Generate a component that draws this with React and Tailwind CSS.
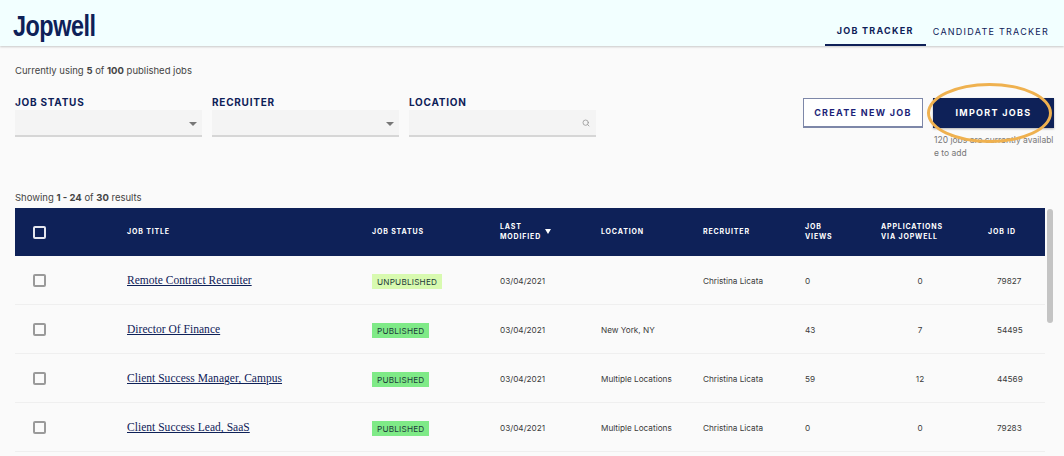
import React from "react";
import { Search } from "lucide-react";

const jobs = [
  { title: "Remote Contract Recruiter", status: "UNPUBLISHED", date: "03/04/2021", location: "", recruiter: "Christina Licata", views: "0", apps: "0", id: "79827" },
  { title: "Director Of Finance", status: "PUBLISHED", date: "03/04/2021", location: "New York, NY", recruiter: "", views: "43", apps: "7", id: "54495" },
  { title: "Client Success Manager, Campus", status: "PUBLISHED", date: "03/04/2021", location: "Multiple Locations", recruiter: "Christina Licata", views: "59", apps: "12", id: "44569" },
  { title: "Client Success Lead, SaaS", status: "PUBLISHED", date: "03/04/2021", location: "Multiple Locations", recruiter: "Christina Licata", views: "0", apps: "0", id: "79283" },
];

const gridCols = "grid grid-cols-[112px_245px_128px_101px_102px_102px_76px_107px_57px] items-center";

const Filter = ({ label, children }) => (
  <div className="w-[187px]">
    <div className="text-[10px] leading-[12px] font-bold tracking-[0.75px] text-[#0e2158]">{label}</div>
    <div className="mt-[2px] flex h-[27px] items-center justify-end border-b-2 border-[#d6d6d6] bg-[#f4f4f4] pr-[5px]">
      {children}
    </div>
  </div>
);

const Caret = () => (
  <div className="mt-[2px] h-0 w-0 border-x-[4px] border-t-[4px] border-x-transparent border-t-[#777777]" />
);

const Checkbox = ({ dark }) => (
  <div className={`ml-[18px] h-[13px] w-[13px] rounded-[2px] border-2 ${dark ? "border-[#e4e6ee]" : "-mt-[2px] border-[#9a9a9a]"}`} />
);

const Row = ({ job }) => (
  <div className={`${gridCols} h-[49px] border-b border-[#efefef] pt-[2px] text-[8.2px] text-[#3a3a3a]`}>
    <Checkbox />
    <a className="font-['Liberation_Serif',serif] text-[11.5px] tracking-[0.03px] text-[#0e2158] underline">{job.title}</a>
    <div>
      <span className={`inline-block h-[15px] px-[5px] text-[8.2px] leading-[16px] tracking-[0.2px] text-[#1d3a3a] ${job.status === "PUBLISHED" ? "bg-[#7fea87]" : "bg-[#d8fab0]"}`}>
        {job.status}
      </span>
    </div>
    <div>{job.date}</div>
    <div>{job.location}</div>
    <div>{job.recruiter}</div>
    <div>{job.views}</div>
    <div className="pr-[29px] text-center">{job.apps}</div>
    <div className="pl-[9px]">{job.id}</div>
  </div>
);

export default function App() {
  return (
    <div className="relative h-[456px] w-[1064px] overflow-hidden bg-[#fafafa] font-['Inter',sans-serif]">
      <header className="flex h-[46px] items-stretch justify-between bg-[#f2ffff] pl-[13px] pr-[15px] shadow-[0_1px_2px_rgba(0,0,0,0.2)]">
        <div className="origin-left scale-x-[0.78] pt-[9px] font-['Liberation_Sans',sans-serif] text-[30px] leading-[34px] font-bold tracking-[-0.6px] text-[#0e2158]">
          Jopwell
        </div>
        <nav className="flex items-end text-[9px] tracking-[1.25px] text-[#0e2158]">
          <div className="flex h-[30px] w-[101px] items-center justify-center border-b-[2px] border-[#0e2158] pt-[1px] font-bold">
            JOB TRACKER
          </div>
          <div className="flex h-[30px] items-center pt-[1px] pl-[7px]">CANDIDATE TRACKER</div>
        </nav>
      </header>

      <main className="px-[15px]">
        <p className="pt-[19px] text-[9.5px] leading-[12px] text-[#444444]">
          Currently using <b>5</b> of <b>100</b> published jobs
        </p>

        <div className="mt-[19px] flex h-[96px] items-start justify-between">
          <div className="flex gap-[10px]">
            <Filter label="JOB STATUS"><Caret /></Filter>
            <Filter label="RECRUITER"><Caret /></Filter>
            <Filter label="LOCATION">
              <Search size={8} strokeWidth={2.5} color="#999999" className="mr-[1px]" />
            </Filter>
          </div>
          <div className="-mr-[9px] flex gap-[10px] pt-[2px] pr-[4px]">
            <button className="h-[30px] w-[120px] border border-b-2 border-[#7d87a8] bg-white text-[9px] font-bold tracking-[1.3px] text-[#1d1f78]">
              CREATE NEW JOB
            </button>
            <div className="w-[121px]">
              <button className="h-[30px] w-full bg-[#0e2158] text-[9px] font-bold tracking-[1.3px] text-white shadow-[0_1px_2px_rgba(0,0,0,0.3)]">
                IMPORT JOBS
              </button>
              <p className="mt-[6px] break-all pl-[1px] text-[8.5px] leading-[13px] text-[#777777]">
                120 jobs are currently available to add
              </p>
            </div>
          </div>
        </div>

        <p className="text-[9.5px] leading-[12px] text-[#444444]">
          Showing <b>1 - 24</b> of <b>30</b> results
        </p>

        <div className="mt-[4px] w-[1030px]">
          <div className={`${gridCols} h-[48px] bg-[#0e2158] text-[7px] leading-[10px] font-bold tracking-[0.85px] text-white`}>
            <Checkbox dark />
            <div>JOB TITLE</div>
            <div>JOB STATUS</div>
            <div className="flex items-center gap-[4px]">
              <span>LAST<br />MODIFIED</span>
              <div className="-mt-[2px] h-0 w-0 border-x-[3px] border-t-[5px] border-x-transparent border-t-white" />
            </div>
            <div>LOCATION</div>
            <div>RECRUITER</div>
            <div>JOB<br />VIEWS</div>
            <div>APPLICATIONS<br />VIA JOPWELL</div>
            <div>JOB ID</div>
          </div>
          {jobs.map((job) => (
            <Row key={job.id} job={job} />
          ))}
        </div>
      </main>

      {/* scrollbar */}
      <div className="absolute top-[209px] right-[11px] h-[114px] w-[6px] rounded-[3px] bg-[#c4c4c4]" />
      {/* hand-drawn highlight round the import button */}
      <div className="absolute top-[83px] left-[927px] h-[60px] w-[125px] rounded-[50%] border-[3px] border-[#efb14f]" />
    </div>
  );
}
